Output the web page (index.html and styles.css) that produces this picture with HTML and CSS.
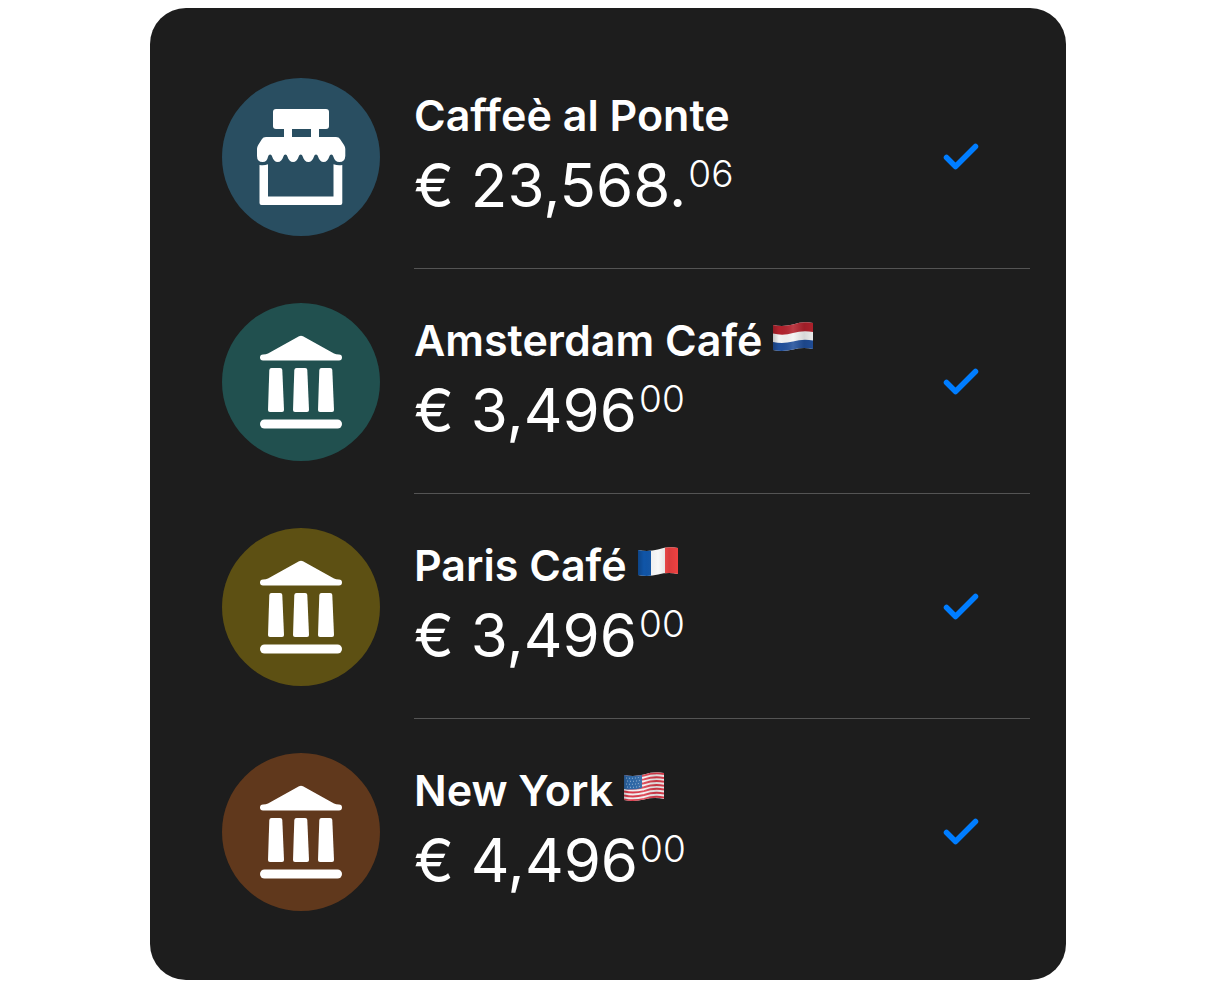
FILE: index.html
```
<!DOCTYPE html>
<html lang="en">
<head>
	<meta charset="UTF-8">
	<title>Accounts</title>
	<link rel="stylesheet" href="styles.css">
</head>
<body>
<svg class="defs" aria-hidden="true">
	<symbol id="store" viewBox="0 0 158 158">
		<rect x="51" y="31" width="56" height="20" rx="3"/>
		<path d="M62 50h8v10h-8zM89 50h8v10h-8z"/>
		<path d="M44 59H114Q117 59 118 61L122 67Q123.300 69 123.300 71V78Q123 84 117.300 84Q113 84 111.300 78.500q-.5-2-2-2q-1.500 0-2 2c-1 3.500-3 5.500-5.650 5.500s-4.650-2-5.650-5.500q-.5-2-2-2q-1.500 0-2 2c-1 3.500-3 5.500-5.650 5.500s-4.650-2-5.650-5.500q-.5-2-2-2q-1.500 0-2 2c-1 3.500-3 5.500-5.650 5.500s-4.650-2-5.650-5.500q-.5-2-2-2q-1.500 0-2 2c-1 3.500-3 5.500-5.650 5.500s-4.650-2-5.650-5.500q-.5-2-2-2q-1.500 0-2 2Q45 84 40.700 84Q35 84 35 78V71Q35 69 36.200 67L40 61Q41 59 44 59Z"/>
		<path d="M37.500 87Q42 88 46 86.200V118.500H111.500V86.200Q116 88 120.300 87V125Q120.300 127 118.300 127H39.500Q37.500 127 37.500 125Z"/>
	</symbol>
	<symbol id="bank" viewBox="0 0 158 158">
		<path d="M77 33.300Q79 32 81 33.300L112 50.500Q114 51.500 117 51.500A3 3 0 0 1 117 57.500H41A3 3 0 0 1 41 51.500Q44 51.500 46 50.500Z"/>
		<path id="column" d="M49.500 65H58.200Q60.200 65 60.300 67L62 107Q62 109 60 109H48Q46 109 46 107L47.300 67Q47.500 65 49.500 65Z"/>
		<use href="#column" x="25"/>
		<use href="#column" x="50"/>
		<rect x="38" y="116.500" width="82" height="9" rx="4.500"/>
	</symbol>
	<symbol id="check" viewBox="0 0 36 28">
		<path d="M3.500 15.500L12.500 24.500L32.500 4.500" fill="none" stroke="currentColor" stroke-width="5.500" stroke-linecap="round" stroke-linejoin="round"/>
	</symbol>
	<linearGradient id="shade">
		<stop offset="0" stop-color="#000" stop-opacity=".2"/>
		<stop offset=".15" stop-color="#000" stop-opacity="0"/>
		<stop offset=".5" stop-color="#fff" stop-opacity=".12"/>
		<stop offset=".78" stop-color="#000" stop-opacity=".12"/>
		<stop offset="1" stop-color="#000" stop-opacity=".04"/>
	</linearGradient>
	<clipPath id="wave">
		<path d="M0 3Q10 5 20 2.500Q30 -1 40 1V27Q30 25 20 27.500Q10 30 0 28Z"/>
	</clipPath>
</svg>

<ul class="accounts">
	<li class="account">
		<svg class="icon blue" aria-hidden="true"><use href="#store"/></svg>
		<div class="details">
			<div class="text">
				<h2 class="name">Caffeè al Ponte</h2>
				<p class="amount">€ 23,568.<span class="cents">06</span></p>
			</div>
			<svg class="check" role="img" aria-label="Selected"><use href="#check"/></svg>
		</div>
	</li>
	<li class="account">
		<svg class="icon green" aria-hidden="true"><use href="#bank"/></svg>
		<div class="details">
			<div class="text">
				<h2 class="name">Amsterdam Café
					<svg class="flag" viewBox="0 0 40 30" role="img" aria-label="Netherlands">
						<g clip-path="url(#wave)">
							<rect width="40" height="30" fill="#f4f4f4"/>
							<path d="M0 -3H40V10Q30 8 20 11Q10 14 0 11.500Z" fill="#b3222d"/>
							<path d="M0 20Q10 22 20 19.500Q30 16.500 40 18.500V30H0Z" fill="#204f9b"/>
							<rect width="40" height="30" fill="url(#shade)"/>
						</g>
					</svg>
				</h2>
				<p class="amount">€ 3,496<span class="cents">00</span></p>
			</div>
			<svg class="check" role="img" aria-label="Selected"><use href="#check"/></svg>
		</div>
	</li>
	<li class="account">
		<svg class="icon olive" aria-hidden="true"><use href="#bank"/></svg>
		<div class="details">
			<div class="text">
				<h2 class="name">Paris Café
					<svg class="flag" viewBox="0 0 40 30" role="img" aria-label="France">
						<g clip-path="url(#wave)">
							<rect width="40" height="30" fill="#f8f8f8"/>
							<rect width="13" height="30" fill="#1055a8"/>
							<rect x="27" width="13" height="30" fill="#f84444"/>
							<rect width="40" height="30" fill="url(#shade)"/>
						</g>
					</svg>
				</h2>
				<p class="amount">€ 3,496<span class="cents">00</span></p>
			</div>
			<svg class="check" role="img" aria-label="Selected"><use href="#check"/></svg>
		</div>
	</li>
	<li class="account">
		<svg class="icon brown" aria-hidden="true"><use href="#bank"/></svg>
		<div class="details">
			<div class="text">
				<h2 class="name">New York
					<svg class="flag" viewBox="0 0 40 30" role="img" aria-label="United States">
						<g clip-path="url(#wave)">
							<rect width="40" height="30" fill="#f4f1f2"/>
							<g fill="none" stroke="#dc3b4b" stroke-width="2">
								<path id="stripe" d="M0 4Q10 6 20 3.500Q30 0 40 2"/>
								<use href="#stripe" y="3.900"/>
								<use href="#stripe" y="7.800"/>
								<use href="#stripe" y="11.700"/>
								<use href="#stripe" y="15.600"/>
								<use href="#stripe" y="19.500"/>
								<use href="#stripe" y="23.400"/>
							</g>
							<path d="M0 0H18V16Q9 18.500 0 17Z" fill="#2e68a8"/>
							<g fill="none" stroke="#a9c6e2" stroke-width="1" stroke-dasharray="1 2">
								<path d="M2 6Q9 7 17 5"/>
								<path d="M3 9Q10 10 17 8"/>
								<path d="M2 12Q9 13 17 11"/>
								<path d="M3 15Q10 16 17 14"/>
							</g>
							<rect width="40" height="30" fill="url(#shade)"/>
						</g>
					</svg>
				</h2>
				<p class="amount">€ 4,496<span class="cents">00</span></p>
			</div>
			<svg class="check" role="img" aria-label="Selected"><use href="#check"/></svg>
		</div>
	</li>
</ul>
</body>
</html>
```
FILE: styles.css
```
*{
	box-sizing: border-box;
}
body{
	margin: 8px;
	background: #fff;
	font-family: Inter, "Liberation Sans", sans-serif;
}
.defs{
	position: absolute;
	width: 0;
	height: 0;
}
.accounts{
	list-style: none;
	max-width: 916px;
	margin: 0 auto;
	padding: 36px 36px 36px 72px;
	border-radius: 36px;
	background: #1d1d1d;
	color: #fff;
}
.account{
	display: flex;
	align-items: center;
	gap: 34px;
}
.icon{
	flex: none;
	width: 158px;
	height: 158px;
	border-radius: 50%;
	fill: #fff;
}
.blue{
	background: #294e61;
}
.green{
	background: #21504f;
}
.olive{
	background: #5d5013;
}
.brown{
	background: #60381c;
}
.details{
	flex: 1;
	display: flex;
	align-items: center;
	justify-content: space-between;
	padding: 40px 51px 40px 0;
	border-bottom: 1px solid #545454;
}
.account:last-child .details{
	border-bottom-color: transparent;
}
.text{
	padding-bottom: 4px;
}
.name{
	margin: 0;
	font-size: 43px;
	font-weight: 600;
	line-height: 62px;
	white-space: nowrap;
}
.flag{
	width: 40px;
	height: 30px;
	vertical-align: 4px;
}
.amount{
	display: flex;
	gap: 2px;
	margin: 0;
	font-size: 60px;
	font-weight: 400;
	line-height: 78px;
	white-space: nowrap;
}
.cents{
	font-size: 37px;
	font-weight: 300;
	line-height: 56px;
}
.check{
	flex: none;
	width: 36px;
	height: 28px;
	color: #007dff;
}
```
